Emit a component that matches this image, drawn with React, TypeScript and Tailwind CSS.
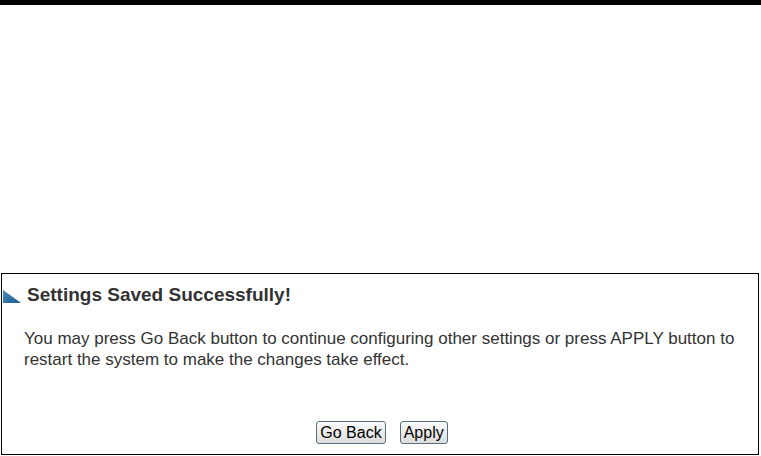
import React from "react";

const font = { fontFamily: '"Liberation Sans", Arial, sans-serif' };

export default function App() {
  return (
    <div className="w-[761px] h-[456px] bg-white relative overflow-hidden" style={font}>
      <div className="h-[5px] bg-black w-full" />
      <div className="mt-[268px] ml-[1px] w-[758px] h-[182px] border border-black flex flex-col">
        <div className="flex items-center mt-[10px] h-[22px]">
          <svg width="18" height="13" viewBox="0 0 18 13" className="ml-[1px] mt-[2px]">
            <defs>
              <linearGradient id="tg" x1="0" y1="0" x2="1" y2="1">
                <stop offset="0" stopColor="#4a8cc0" />
                <stop offset="1" stopColor="#1d5a8a" />
              </linearGradient>
            </defs>
            <polygon points="0,0 0,13 18,13" fill="url(#tg)" />
          </svg>
          <span className="ml-[6px] text-[19px] font-bold text-[#333]">Settings Saved Successfully!</span>
        </div>
        <p className="mt-[22px] ml-[22px] mr-[10px] text-[17px] leading-[21px] text-[#333]">
          You may press Go Back button to continue configuring other settings or press APPLY button to
          restart the system to make the changes take effect.
        </p>
        <div className="flex justify-center gap-[14px] mt-[51px] ml-[4px]">
          <button className="h-[23px] px-[3px] text-[16px] leading-none text-black border border-[#5a6d80] rounded-[3px] bg-gradient-to-b from-[#fafafa] to-[#dcdcdc]">
            Go Back
          </button>
          <button className="h-[23px] px-[3px] text-[16px] leading-none text-black border border-[#5a6d80] rounded-[3px] bg-gradient-to-b from-[#fafafa] to-[#dcdcdc]">
            Apply
          </button>
        </div>
      </div>
    </div>
  );
}
